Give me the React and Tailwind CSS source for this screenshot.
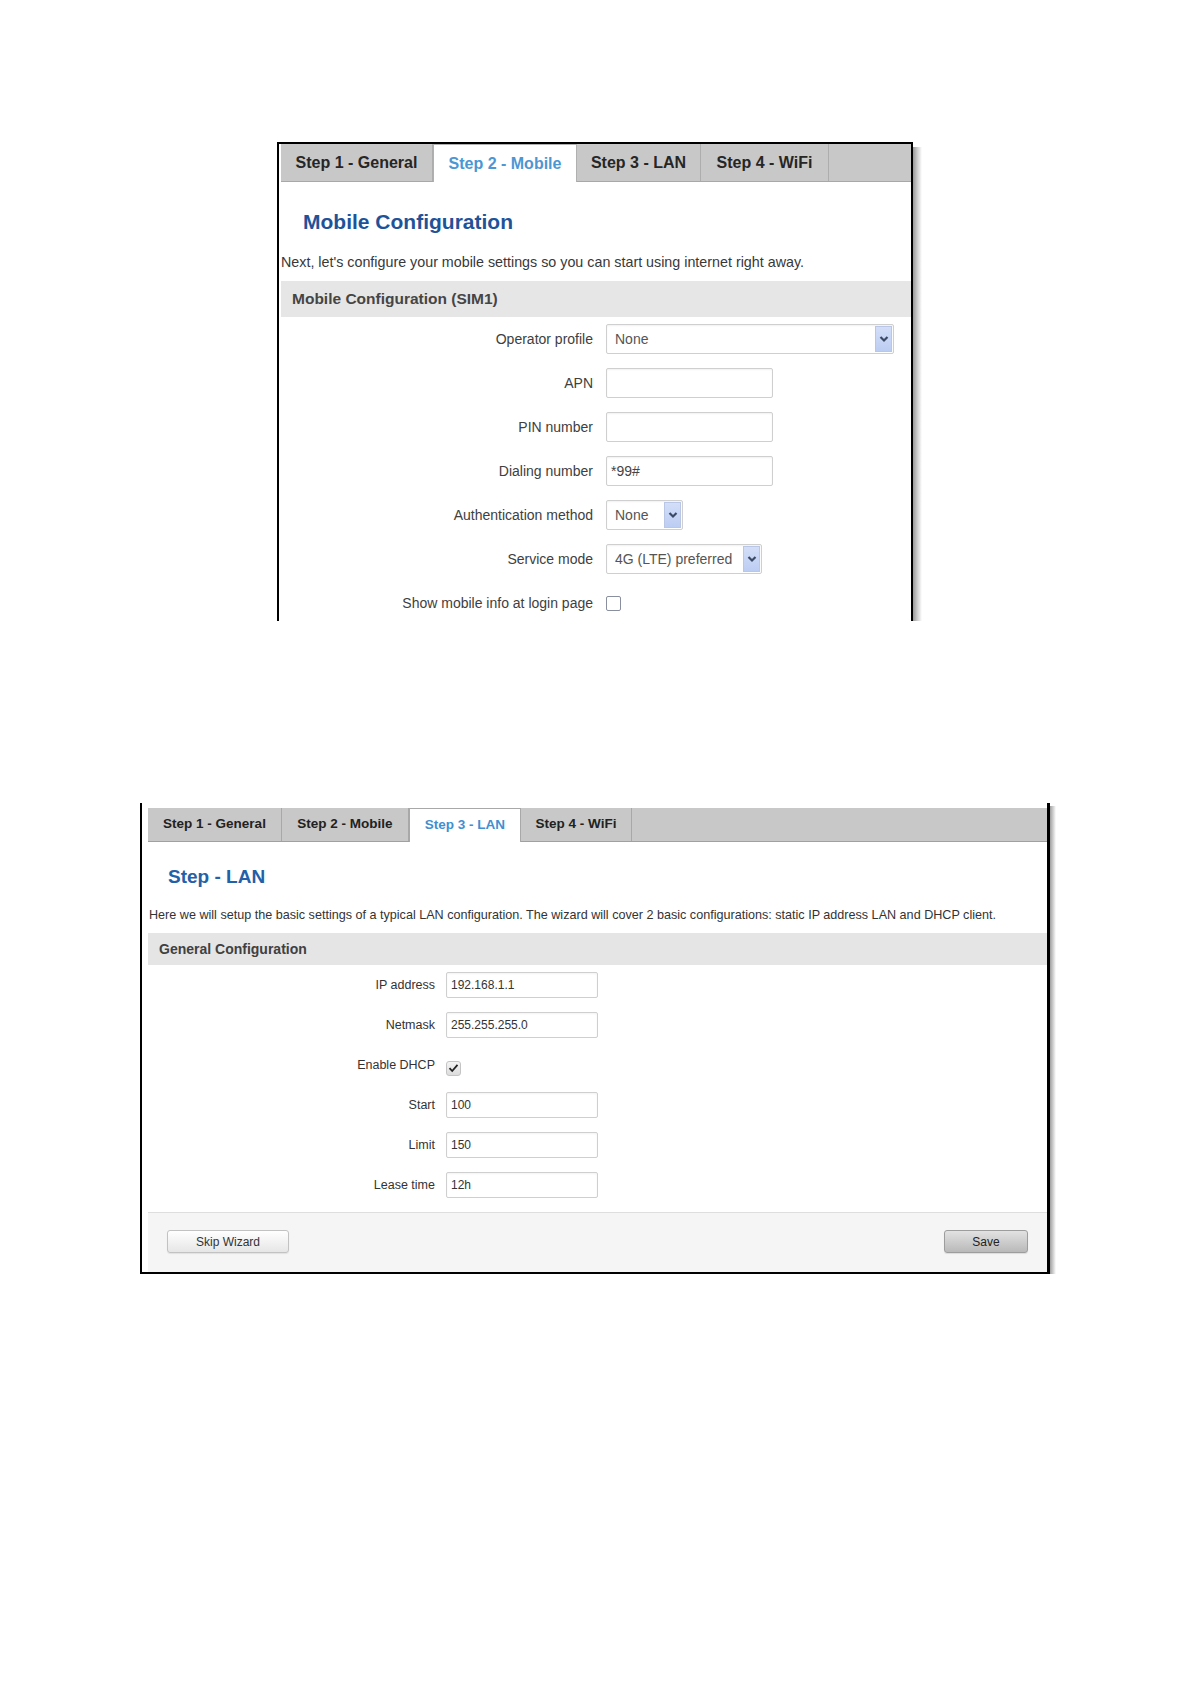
import React from "react";

const font = "font-['Liberation_Sans',Arial,sans-serif]";

function Chevron() {
  return (
    <svg width="10" height="8" viewBox="0 0 10 8">
      <path d="M1.5 2 L5 5.5 L8.5 2" fill="none" stroke="#3d4a66" strokeWidth="2.2" />
    </svg>
  );
}

function Select({ value, width }) {
  return (
    <div
      className={`flex h-[30px] items-center justify-between rounded-[2px] border border-[#cfcfcf] bg-white pl-2 pr-[1px] shadow-[inset_0_1px_2px_rgba(0,0,0,0.06)] ${width}`}
    >
      <span className="text-[14px] text-[#555]">{value}</span>
      <span className="flex h-[26px] w-[17px] items-center justify-center border border-[#b9c6e6] bg-gradient-to-b from-[#d3def8] to-[#bccdf3]">
        <Chevron />
      </span>
    </div>
  );
}

function Input({ value, width }) {
  return (
    <div
      className={`flex h-[30px] items-center rounded-[2px] border border-[#cfcfcf] bg-white pl-[4px] text-[14px] text-[#444] shadow-[inset_0_1px_2px_rgba(0,0,0,0.06)] ${width}`}
    >
      {value}
    </div>
  );
}

function Row1({ label, children }) {
  return (
    <div className="flex h-[30px] items-center">
      <div className="w-[313px] pr-[1px] text-right text-[14px] text-[#404040]">{label}</div>
      <div className="ml-[12px] flex items-center">{children}</div>
    </div>
  );
}

function Row2({ label, children }) {
  return (
    <div className="flex h-[26px] items-center">
      <div className="w-[287px] text-right text-[12.5px] text-[#333]">{label}</div>
      <div className="ml-[11px] flex items-center">{children}</div>
    </div>
  );
}

function Input2({ value }) {
  return (
    <div className="flex h-[26px] w-[152px] items-center rounded-[2px] border border-[#cfcfcf] bg-white pl-[4px] text-[12px] text-[#333] shadow-[inset_0_1px_2px_rgba(0,0,0,0.05)]">
      {value}
    </div>
  );
}

function MobileBox() {
  const tabs = [
    { name: "Step 1 - General", w: "w-[152px]" },
    { name: "Step 2 - Mobile", w: "w-[144px]", active: true },
    { name: "Step 3 - LAN", w: "w-[124px]" },
    { name: "Step 4 - WiFi", w: "w-[128px]" },
  ];
  return (
    <div className="ml-[277px] mt-[142px] flex">
      <div className="h-[479px] w-[636px] border-x-2 border-t-2 border-black bg-white pl-[2px]">
        <div className="flex h-[38px] border-b border-[#a8a8a8] bg-[#c8c8c8]">
          {tabs.map((t) =>
            t.active ? (
              <div
                key={t.name}
                className={`-mb-px flex items-center justify-center border-x border-t border-[#b0b0b0] bg-white text-[16px] font-bold text-[#4a97d4] ${t.w}`}
              >
                {t.name}
              </div>
            ) : (
              <div
                key={t.name}
                className={`flex items-center justify-center border-r border-[#adadad] text-[16px] font-bold text-[#262626] ${t.w}`}
              >
                {t.name}
              </div>
            )
          )}
        </div>
        <h1 className="ml-[22px] mt-[27px] text-[21px] font-bold leading-[26px] text-[#1f5399]">
          Mobile Configuration
        </h1>
        <p className="mt-[18px] text-[14.3px] leading-[18px] text-[#383838]">
          Next, let's configure your mobile settings so you can start using internet right away.
        </p>
        <div className="mt-[10px] flex h-[36px] items-center bg-[#e6e6e6] pl-[11px] text-[15.5px] font-bold text-[#454545]">
          Mobile Configuration (SIM1)
        </div>
        <div className="mt-[7px] flex flex-col gap-[14px]">
          <Row1 label="Operator profile">
            <Select value="None" width="w-[288px]" />
          </Row1>
          <Row1 label="APN">
            <Input value="" width="w-[167px]" />
          </Row1>
          <Row1 label="PIN number">
            <Input value="" width="w-[167px]" />
          </Row1>
          <Row1 label="Dialing number">
            <Input value="*99#" width="w-[167px]" />
          </Row1>
          <Row1 label="Authentication method">
            <Select value="None" width="w-[77px]" />
          </Row1>
          <Row1 label="Service mode">
            <Select value="4G (LTE) preferred" width="w-[156px]" />
          </Row1>
          <Row1 label="Show mobile info at login page">
            <div className="h-[15px] w-[15px] rounded-[2px] border border-[#8a8fa0] bg-white" />
          </Row1>
        </div>
      </div>
      <div className="mt-[5px] h-[474px] w-[9px] bg-gradient-to-r from-[#9a9a9a] via-[#cfcfcf] to-white" />
    </div>
  );
}

function LanBox() {
  const tabs = [
    { name: "Step 1 - General", w: "w-[134px]" },
    { name: "Step 2 - Mobile", w: "w-[127px]" },
    { name: "Step 3 - LAN", w: "w-[112px]", active: true },
    { name: "Step 4 - WiFi", w: "w-[111px]" },
  ];
  return (
    <div className="ml-[140px] mt-[182px] flex">
      <div className="w-[910px] border-b-2 border-l-2 border-r-[3px] border-black bg-white pl-[6px] pt-[5px]">
        <div className="flex h-[34px] border-b border-[#a0a0a0] bg-[#c8c8c8]">
          {tabs.map((t) =>
            t.active ? (
              <div
                key={t.name}
                className={`-mb-px flex items-center justify-center border-x border-t border-[#a8a8a8] bg-white text-[13.5px] font-bold text-[#3f8fd2] ${t.w}`}
              >
                {t.name}
              </div>
            ) : (
              <div
                key={t.name}
                className={`flex items-center justify-center border-r border-[#a8a8a8] text-[13.5px] font-bold text-[#222] ${t.w}`}
              >
                {t.name}
              </div>
            )
          )}
        </div>
        <h1 className="ml-[20px] mt-[23px] text-[19px] font-bold leading-[24px] text-[#2460a8]">
          Step - LAN
        </h1>
        <p className="ml-[1px] mt-[18px] text-[12.6px] leading-[16px] text-[#333]">
          Here we will setup the basic settings of a typical LAN configuration. The wizard will cover 2 basic
          configurations: static IP address LAN and DHCP client.
        </p>
        <div className="mt-[10px] flex h-[32px] items-center bg-[#e5e5e5] pl-[11px] text-[14px] font-bold text-[#404040]">
          General Configuration
        </div>
        <div className="mt-[7px] flex flex-col gap-[14px]">
          <Row2 label="IP address">
            <Input2 value="192.168.1.1" />
          </Row2>
          <Row2 label="Netmask">
            <Input2 value="255.255.255.0" />
          </Row2>
          <Row2 label="Enable DHCP">
            <div className="mt-[6px] flex h-[15px] w-[15px] items-center justify-center rounded-[3px] border border-[#c4c4c4] bg-gradient-to-b from-[#f4f4f4] to-[#dcdcdc]">
              <svg width="11" height="10" viewBox="0 0 11 10">
                <path d="M1.5 5.2 L4.2 8 L9.5 1.8" fill="none" stroke="#222" strokeWidth="1.8" />
              </svg>
            </div>
          </Row2>
          <Row2 label="Start">
            <Input2 value="100" />
          </Row2>
          <Row2 label="Limit">
            <Input2 value="150" />
          </Row2>
          <Row2 label="Lease time">
            <Input2 value="12h" />
          </Row2>
        </div>
        <div className="mt-[14px] flex h-[60px] items-start justify-between border-t border-[#dedede] bg-[#f5f5f5] px-[19px] pt-[17px]">
          <button className="h-[23px] w-[122px] rounded-[3px] border border-[#c2c2c2] bg-gradient-to-b from-white to-[#e6e6e6] text-[12px] text-[#333] shadow-[0_1px_1px_rgba(0,0,0,0.08)]">
            Skip Wizard
          </button>
          <button className="h-[23px] w-[84px] rounded-[3px] border border-[#9d9d9d] bg-gradient-to-b from-[#e2e2e2] to-[#b9b9b9] text-[12px] text-[#222] shadow-[0_1px_1px_rgba(0,0,0,0.1)]">
            Save
          </button>
        </div>
      </div>
      <div className="mt-[3px] w-[6px] bg-gradient-to-r from-[#a0a0a0] to-white" />
    </div>
  );
}

export default function App() {
  return (
    <div className={`h-[1684px] w-[1191px] overflow-hidden bg-white pt-px ${font}`}>
      <div className="-mt-px">
        <MobileBox />
        <LanBox />
      </div>
    </div>
  );
}
